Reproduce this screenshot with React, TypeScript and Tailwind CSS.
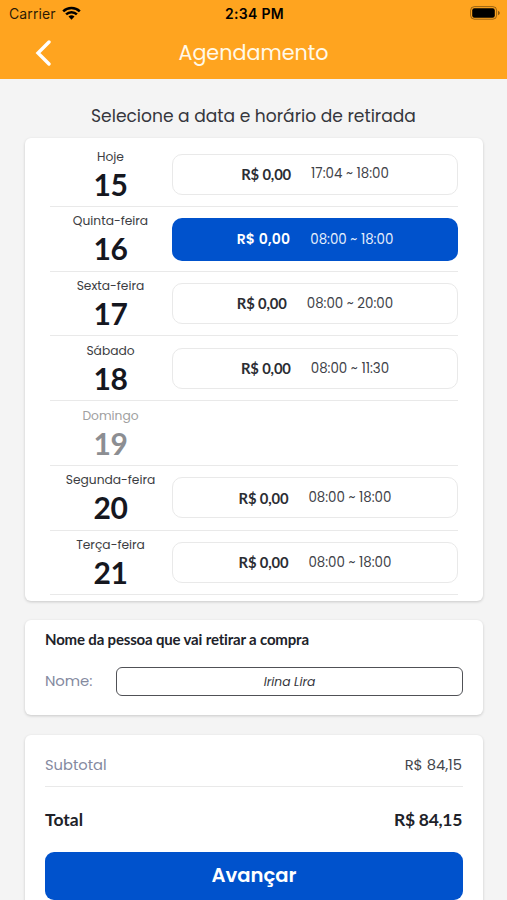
import React from "react";

const poppins = "font-['Poppins','Inter',sans-serif] whitespace-nowrap";
const lato = "font-['Lato',sans-serif] whitespace-nowrap";

type Slot = { day: string; date: number; time?: string; selected?: boolean };

const slots: Slot[] = [
  { day: "Hoje", date: 15, time: "17:04 ~ 18:00" },
  { day: "Quinta-feira", date: 16, time: "08:00 ~ 18:00", selected: true },
  { day: "Sexta-feira", date: 17, time: "08:00 ~ 20:00" },
  { day: "Sábado", date: 18, time: "08:00 ~ 11:30" },
  { day: "Domingo", date: 19 },
  { day: "Segunda-feira", date: 20, time: "08:00 ~ 18:00" },
  { day: "Terça-feira", date: 21, time: "08:00 ~ 18:00" },
];

function StatusBar() {
  return (
    <div className="grid h-[27px] grid-cols-3 items-center pl-[9px] pr-[7px] text-black font-['Inter',sans-serif]">
      <div className="flex items-center gap-[6px]">
        <span className="text-[14px] leading-none tracking-[0.1px] text-black/85">Carrier</span>
        <svg className="-mt-[2px]" width="19" height="14" viewBox="0 0 19 14" fill="none" stroke="currentColor" strokeWidth="2.5">
          <path d="M1.2 5.4a11.8 11.8 0 0 1 16.6 0" />
          <path d="M4.1 8.4a7.6 7.6 0 0 1 10.8 0" />
          <path d="M9.5 13.7 6.5 10.6a4.3 4.3 0 0 1 6 0z" fill="currentColor" stroke="none" />
        </svg>
      </div>
      <span className="pt-[1px] text-center text-[14px] font-semibold leading-none tracking-[0.3px]">2:34 PM</span>
      <div className="-mt-[1px] flex justify-end">
        <svg width="30" height="14" viewBox="0 0 30 14">
          <rect x="0.6" y="0.6" width="26" height="12.6" rx="3.8" fill="none" stroke="#000" strokeOpacity=".4" />
          <rect x="2.2" y="2.3" width="22.6" height="9.4" rx="2.2" fill="#000" />
          <path d="M28 4.7c2.4 1 2.4 3.5 0 4.5z" fill="#000" fillOpacity=".45" />
        </svg>
      </div>
    </div>
  );
}

function Row({ slot }: { slot: Slot }) {
  const muted = !slot.time;
  return (
    <div className="flex h-[64.75px] shrink-0 border-b-[1.5px] border-[#e9e9e9]">
      <div className="flex w-[121px] flex-col items-center pt-[5.5px]">
        <span className={`${poppins} text-[12.25px] leading-[18px] ${muted ? "text-[#a0a0a0]" : "text-[#3c3d42]"}`}>{slot.day}</span>
        <span className={`${lato} text-[30px] font-bold leading-[36px] tracking-[-0.3px] ${muted ? "text-[#8c8e92]" : "text-[#15171f]"}`}>{slot.date}</span>
      </div>
      {slot.time && (
        <div
          className={`ml-[1px] flex w-[286px] items-center justify-center gap-5 rounded-[10px] ${
            slot.selected ? "mt-[11px] h-[43px] bg-[#0052cc] text-white" : "mt-[11.5px] h-[41px] border-[1.5px] border-[#e9e9e9]"
          }`}
        >
          {slot.selected ? (
            <span className={`${poppins} text-[14px] font-semibold tracking-[0.2px]`}>R$ 0,00</span>
          ) : (
            <span className={`${lato} text-[14.8px] font-bold tracking-[-0.15px] text-[#2b2d33]`}>R$ 0,00</span>
          )}
          <span className={`${poppins} pt-[1px] text-[13.4px] ${slot.selected ? "text-[#e6effc]" : "text-[#404248]"}`}>{slot.time}</span>
        </div>
      )}
    </div>
  );
}

const card = "ml-[25px] mr-[24px] flex flex-col rounded-[6px] bg-white shadow-[0_1px_3px_rgba(0,0,0,0.18)]";

export default function App() {
  return (
    <div className="flex h-[900px] w-[507px] flex-col overflow-hidden bg-[#f4f4f4]">
      <header className="h-[79px] shrink-0 bg-[#ffa41f]">
        <StatusBar />
        <div className="grid h-[51px] grid-cols-[80px_1fr_80px] items-center">
          <svg className="ml-[35px]" width="17" height="26" viewBox="0 0 17 26" fill="none" stroke="white" strokeWidth="3.4" strokeLinecap="round" strokeLinejoin="miter">
            <path d="M14 2 3 13l11 11" />
          </svg>
          <h1 className={`${poppins} pt-[2px] text-center text-[20.7px] leading-none text-[#fff9e9]`}>Agendamento</h1>
        </div>
      </header>
      <h2 className={`${poppins} mt-[24px] shrink-0 text-center text-[17.1px] leading-[26px] text-[#36373d]`}>Selecione a data e horário de retirada</h2>
      <section className={`${card} mt-[8.5px] h-[463px] shrink-0 px-[25px] pt-[4.5px]`}>
        {slots.map((s) => (
          <Row key={s.date} slot={s} />
        ))}
      </section>
      <section className={`${card} mt-[19px] h-[95px] shrink-0 px-5 pt-[9.5px]`}>
        <h3 className={`${lato} text-[15px] font-bold leading-5 tracking-[-0.17px] text-[#202229]`}>Nome da pessoa que vai retirar a compra</h3>
        <div className="mt-[17.5px] flex items-center">
          <span className={`${poppins} w-[71px] text-[14.9px] tracking-[-0.1px] text-[#858a9f]`}>Nome:</span>
          <div className={`${poppins} flex h-[29px] flex-1 items-center justify-center rounded-[6px] border-[1.5px] border-[#505156] pt-[2px] text-[12.3px] italic text-[#36373d]`}>Irina Lira</div>
        </div>
      </section>
      <section className={`${card} mt-[20px] h-[190px] shrink-0 px-5`}>
        <div className="flex h-[52px] items-end justify-between border-b-[1.5px] border-[#e9e9e9] pb-[8.5px] leading-6">
          <span className={`${poppins} text-[14.7px] text-[#858a9f]`}>Subtotal</span>
          <span className={`${poppins} pr-px text-[14.7px] text-[#44464c]`}>R$ 84,15</span>
        </div>
        <div className={`${lato} mt-[21.5px] flex h-6 items-center justify-between text-[17.5px] font-bold text-[#202229]`}>
          <span>Total</span>
          <span className="pr-px tracking-[-0.3px]">R$ 84,15</span>
        </div>
        <button className={`${poppins} mt-[19.5px] h-[48px] shrink-0 rounded-[9px] bg-[#0052cc] text-[19.6px] font-semibold text-white`}>Avançar</button>
      </section>
    </div>
  );
}
